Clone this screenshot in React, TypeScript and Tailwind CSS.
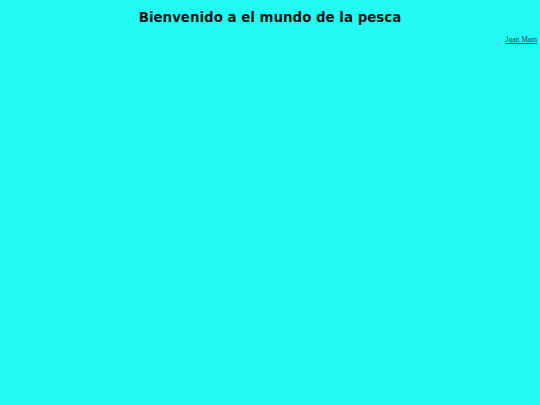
export default function App() {
  return (
    <div className="min-h-[405px] w-full bg-[#22fbf3] font-['DejaVu_Sans',sans-serif]">
      <h1 className="pt-[10px] text-center text-[13.4px] font-bold leading-[16px] text-[#111]">
        Bienvenido a el mundo de la pesca
      </h1>
      <div className="mt-[9px] flex justify-end pr-[3px]">
        <a href="#" className="font-['Liberation_Serif',serif] text-[7.5px] leading-[10px] text-[#1a4a55] underline">
          Juan Mam
        </a>
      </div>
    </div>
  );
}
